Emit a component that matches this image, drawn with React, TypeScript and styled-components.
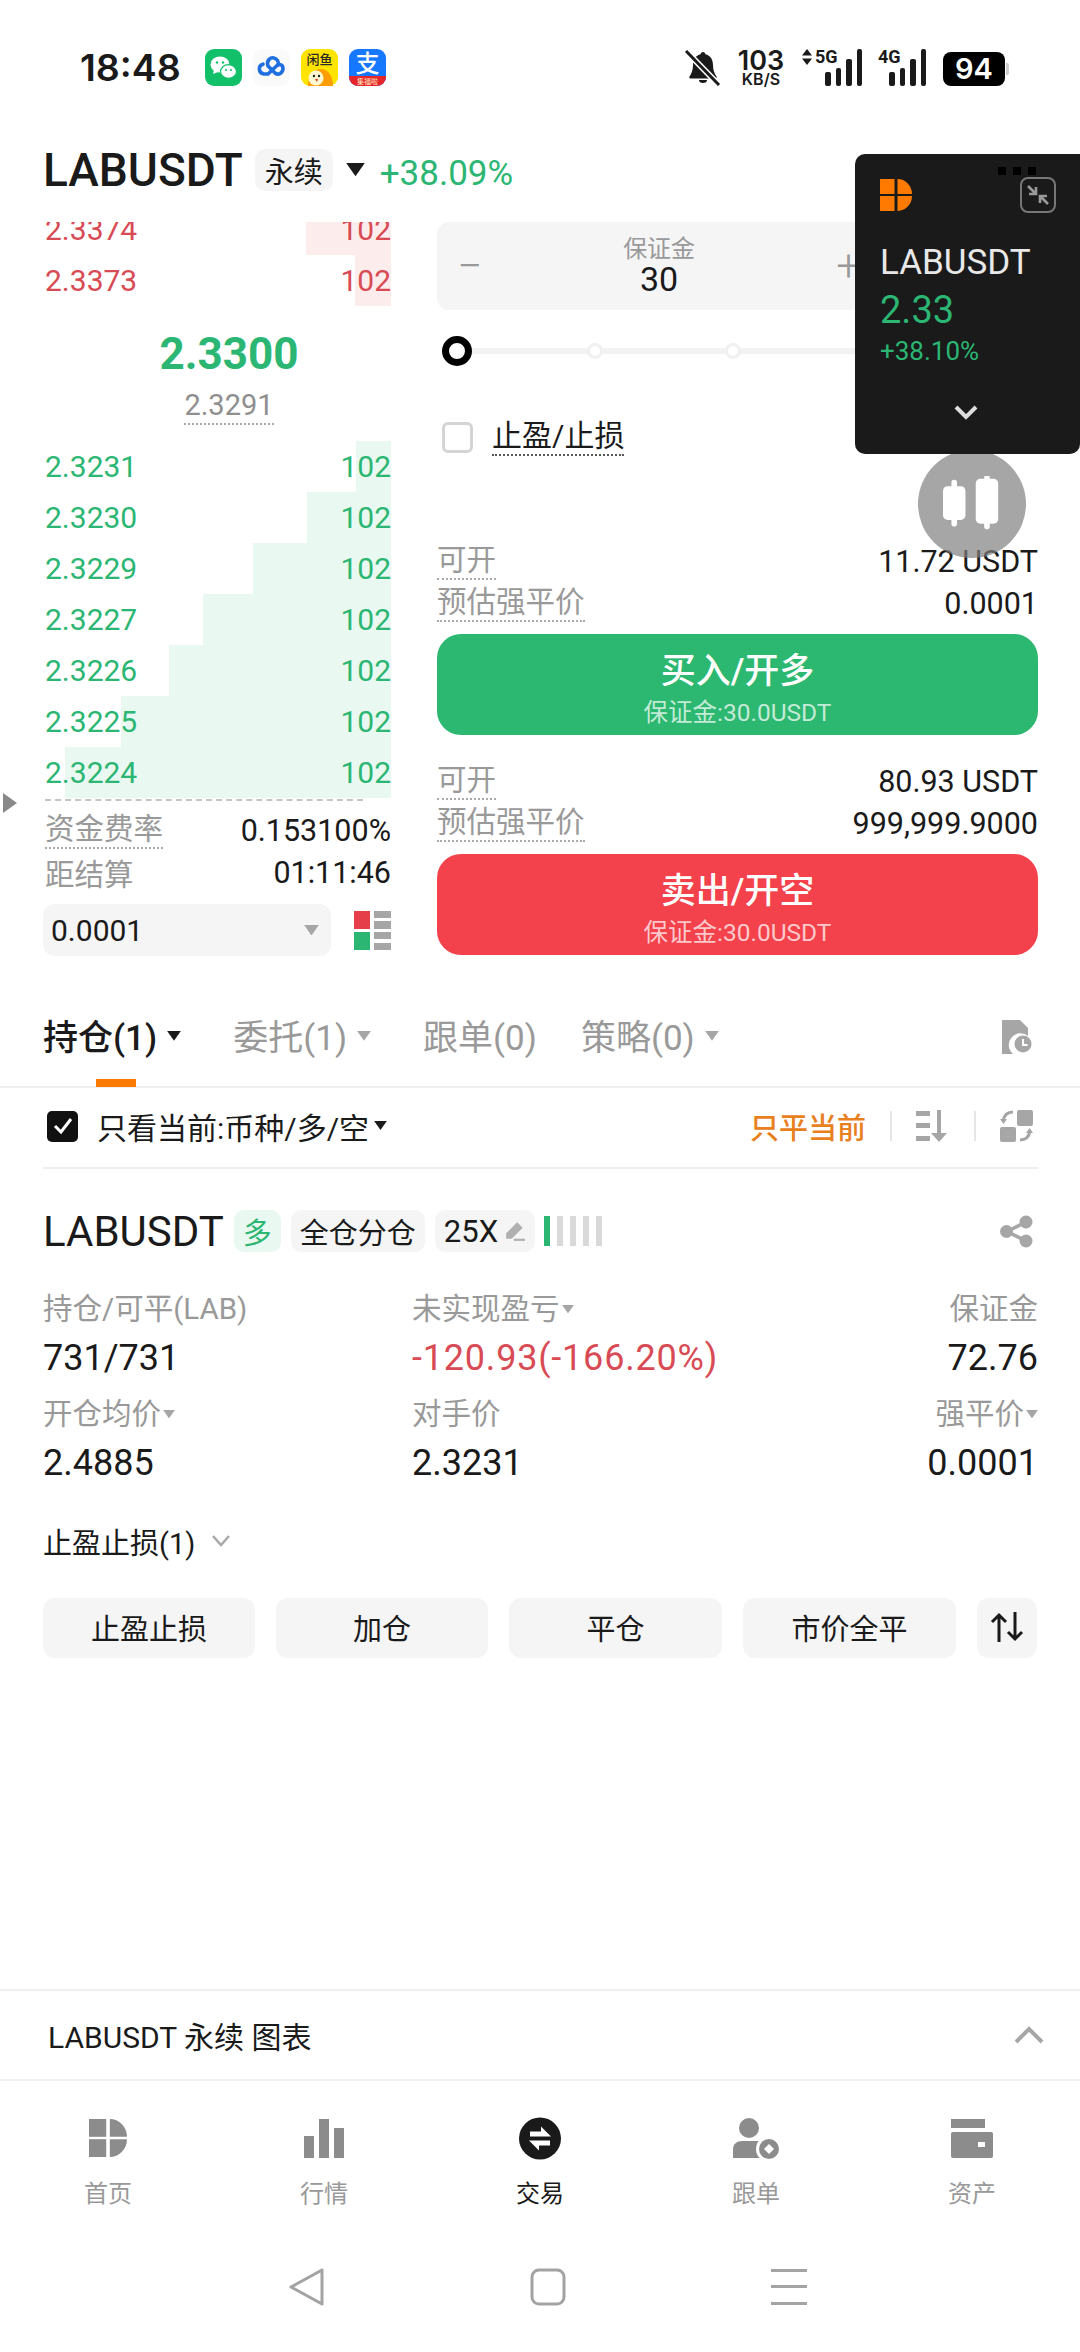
import { FC } from 'react'
import styled, { createGlobalStyle } from 'styled-components'

const GREEN = '#2bb673'
const RED = '#d84a54'
const GRAY = '#999999'
const DARK = '#1a1a1a'
const SOFT = '#f5f5f5'
const FONT = `Roboto, "Noto Sans CJK SC", sans-serif`

const asks = [
  { price: '2.3374', size: '102', depth: 85 },
  { price: '2.3373', size: '102', depth: 36 }
]

const bids = [
  { price: '2.3231', size: '102', depth: 35 },
  { price: '2.3230', size: '102', depth: 84 },
  { price: '2.3229', size: '102', depth: 138 },
  { price: '2.3227', size: '102', depth: 188 },
  { price: '2.3226', size: '102', depth: 222 },
  { price: '2.3225', size: '102', depth: 270 },
  { price: '2.3224', size: '102', depth: 326 }
]

const GlobalStyle = createGlobalStyle`
  html, body {
    margin: 0;
    padding: 0;
    background: #fff;
  }
`

const LogoMark: FC<{ color: string; size: number }> = ({ color, size }) => (
  <svg width={size} height={size} viewBox="0 0 32 32" fill={color}>
    <rect x="0" y="0" width="14.500" height="15" />
    <rect x="0" y="17" width="14.500" height="15" />
    <path d="M17.500 0a14.500 15 0 0 1 14.500 15H17.500z" />
    <path d="M17.500 17H32a14.500 15 0 0 1-14.500 15z" />
  </svg>
)

const Caret: FC<{ color?: string; size?: number }> = ({ color = '#8a8a8a', size = 13 }) => (
  <svg width={size} height={size * 0.7} viewBox="0 0 14 10" fill={color}>
    <path d="M0 0h14L7 10z" />
  </svg>
)

const WeChat = () => (
  <svg width="37" height="37" viewBox="0 0 37 37">
    <rect width="37" height="37" rx="9" fill="#13c06a" />
    <ellipse cx="15" cy="15.5" rx="9.5" ry="8" fill="#fff" />
    <path d="M9 21l-1 4 5-2z" fill="#fff" />
    <ellipse cx="23.5" cy="22.5" rx="8" ry="6.8" fill="#fff" stroke="#13c06a" strokeWidth="1.2" />
    <circle cx="12" cy="13.5" r="1.2" fill="#13c06a" />
    <circle cx="18" cy="13.5" r="1.2" fill="#13c06a" />
    <circle cx="21" cy="21" r="1" fill="#13c06a" />
    <circle cx="26" cy="21" r="1" fill="#13c06a" />
  </svg>
)

const BaiduCloud = () => (
  <svg width="37" height="37" viewBox="0 0 37 37" fill="none">
    <rect width="37" height="37" rx="9" fill="#fafafa" />
    <path
      d="M14 25h-3a5 5 0 0 1-1-9.800M15 25l9-8.500c2.500-2 6-.5 6 3S26 27 22 24l-7-7c-2-6 3-9 6-8 3.500 1 5 4 4 7"
      stroke="#1f6fe0"
      strokeWidth="3.600"
      strokeLinecap="round"
    />
  </svg>
)

const Xianyu = () => (
  <svg width="37" height="37" viewBox="0 0 37 37">
    <rect width="37" height="37" rx="9" fill="#ffe400" />
    <text x="18.5" y="15" fontSize="13" fontWeight="500" textAnchor="middle" fill="#2a2a2a" fontFamily={FONT}>
      闲鱼
    </text>
    <path d="M7 37c0-10 6-18 14-17 7 1 11 8 11 17z" fill="#ff9d00" />
    <circle cx="15" cy="29" r="7.5" fill="#fff8d0" />
    <circle cx="13" cy="27" r="1.2" fill="#222" />
    <circle cx="18" cy="27" r="1.2" fill="#222" />
    <path d="M14 30l2 3 1-3z" fill="#e8331c" />
  </svg>
)

const Alipay = () => (
  <svg width="37" height="37" viewBox="0 0 37 37">
    <rect width="37" height="37" rx="9" fill="#1677ff" />
    <path d="M0 27h37v1a9 9 0 0 1-9 9H9a9 9 0 0 1-9-9z" fill="#e5252a" />
    <text x="18.5" y="23" fontSize="24" fontWeight="500" textAnchor="middle" fill="#fff" fontFamily={FONT}>
      支
    </text>
    <text x="18.5" y="35" fontSize="7" textAnchor="middle" fill="#ffe9c0" fontFamily={FONT}>
      集福啦
    </text>
  </svg>
)

const MutedBell = () => (
  <svg width="36" height="36" viewBox="0 0 36 36" fill={DARK}>
    <path d="M18 2c-1.400 0-2.300 1-2.400 2.300-5 1.200-7.600 5.400-7.600 10.700 0 5-1.400 8.500-3.500 11.500-.6 1 0 2 1.100 2h24.800c1.100 0 1.700-1 1.100-2-2.100-3-3.500-6.500-3.500-11.500 0-5.300-2.600-9.500-7.600-10.700C20.300 3 19.400 2 18 2z" />
    <path d="M14 30h8a4 3 0 0 1-8 0z" />
    <path d="M1 1l33 34" stroke="#fff" strokeWidth="6" />
    <path d="M1 1l33 34" stroke={DARK} strokeWidth="3" />
  </svg>
)

const Signal: FC<{ heights: number[] }> = ({ heights }) => (
  <SignalBars>
    {heights.map((h, i) => (
      <SignalBar key={i} style={{ height: h }} />
    ))}
  </SignalBars>
)

const CompressIcon = () => (
  <svg width="36" height="36" viewBox="0 0 36 36" fill="none">
    <rect x="1" y="1" width="34" height="34" rx="7" stroke="#777" strokeWidth="2" />
    <path d="M8 9l8 8M16 10v7H9" stroke="#999" strokeWidth="2.6" />
    <path d="M28 27l-8-8M20 26v-7h7" stroke="#999" strokeWidth="2.6" />
  </svg>
)

const CandleIcon = () => (
  <svg width="58" height="56" viewBox="0 0 62 58" fill="#fff">
    <rect x="0" y="10" width="24" height="36" rx="5" />
    <rect x="9" y="3" width="6" height="50" rx="3" />
    <rect x="35" y="2" width="24" height="48" rx="5" />
    <rect x="44" y="-2" width="6" height="58" rx="3" />
  </svg>
)

const DepthIcon = () => (
  <svg width="37" height="39" viewBox="0 0 37 39">
    <rect x="0" y="0" width="16" height="18" fill="#e5404a" />
    <rect x="20" y="0" width="17" height="7" fill="#a6a6a6" />
    <rect x="20" y="10" width="17" height="8" fill="#a6a6a6" />
    <rect x="0" y="21" width="16" height="18" fill={GREEN} />
    <rect x="20" y="21" width="17" height="7" fill="#a6a6a6" />
    <rect x="20" y="32" width="17" height="7" fill="#a6a6a6" />
  </svg>
)

const HistoryDoc = () => (
  <svg width="30" height="34" viewBox="0 0 30 34">
    <path d="M0 0h18l8 8v8a11 11 0 0 0-15 18H0z" fill="#a6a6a6" />
    <circle cx="21" cy="24" r="8.500" fill="#a6a6a6" />
    <path d="M21 19v6h4.500" stroke="#fff" strokeWidth="2" fill="none" />
  </svg>
)

const SortIcon = () => (
  <svg width="34" height="32" viewBox="0 0 34 32" fill="#a6a6a6">
    <rect x="0" y="1" width="14" height="5" />
    <rect x="0" y="13" width="14" height="5" />
    <rect x="0" y="26" width="14" height="5" />
    <rect x="21" y="0" width="4" height="26" />
    <path d="M15 23h16l-8 9z" />
  </svg>
)

const SwapIcon = () => (
  <svg width="33" height="32" viewBox="0 0 33 32" fill="#a6a6a6">
    <rect x="17" y="0" width="16" height="16" rx="2" />
    <rect x="0" y="17" width="16" height="15" rx="2" />
    <path d="M13 2C7 2 4 5 3 11" stroke="#a6a6a6" strokeWidth="3" fill="none" />
    <path d="M0 9h7l-3.500 5z" />
    <path d="M20 30c6 0 9-3 10-9" stroke="#a6a6a6" strokeWidth="3" fill="none" />
    <path d="M26 23h7l-3.500-5z" />
  </svg>
)

const ShareIcon = () => (
  <svg width="33" height="33" viewBox="0 0 33 33">
    <path d="M26 7L7 16.500 26 26" stroke="#a6a6a6" strokeWidth="3.500" fill="none" />
    <circle cx="26" cy="7" r="6.500" fill="#a6a6a6" />
    <circle cx="6.500" cy="16.500" r="6.500" fill="#a6a6a6" />
    <circle cx="26" cy="26" r="6.500" fill="#a6a6a6" />
  </svg>
)

const PencilIcon = () => (
  <svg width="22" height="22" viewBox="0 0 20 20" fill="#b0b0b0">
    <path d="M12 2l5 5L7 17H2v-5z" />
    <rect x="9" y="17" width="10" height="2" />
  </svg>
)

const FlipIcon = () => (
  <svg width="34" height="30" viewBox="0 0 34 30" fill="none" stroke="#1a1a1a" strokeWidth="3">
    <path d="M9 30V3M2 10l7-7 7 7" />
    <path d="M25 0v27M18 20l7 7 7-7" />
  </svg>
)

const HomeIcon = () => <LogoMark color="#8c8c8c" size={38} />

const MarketIcon = () => (
  <svg width="40" height="39" viewBox="0 0 40 39" fill="#8c8c8c">
    <rect x="0" y="17" width="10" height="22" />
    <rect x="15" y="0" width="10" height="39" />
    <rect x="30" y="9" width="10" height="30" />
  </svg>
)

const TradeIcon = () => (
  <svg width="42" height="43" viewBox="0 0 42 43">
    <circle cx="21" cy="21.500" r="21" fill={DARK} />
    <path d="M11 19.500h21l-10-10v5H11z" fill="#fff" />
    <path d="M31 23.500H10l10 10v-5h11z" fill="#fff" />
  </svg>
)

const CopyIcon = () => (
  <svg width="47" height="41" viewBox="0 0 47 41">
    <circle cx="16" cy="10" r="10" fill="#8c8c8c" />
    <path d="M0 40V31c0-5 4-8 9-8h15c5 0 8 3 8 8v9z" fill="#8c8c8c" />
    <circle cx="36" cy="31" r="13" fill="#fff" />
    <circle cx="36" cy="31" r="10" fill="#8c8c8c" />
    <path d="M36 26l5 5-5 5-5-5z" fill="#fff" />
  </svg>
)

const WalletIcon = () => (
  <svg width="42" height="39" viewBox="0 0 42 39" fill="#8c8c8c">
    <rect x="0" y="0" width="34" height="9" />
    <rect x="0" y="13" width="42" height="26" rx="2" />
    <rect x="27" y="23" width="7" height="5" fill="#fff" />
  </svg>
)

const BackIcon = () => (
  <svg width="36" height="38" viewBox="0 0 36 38" fill="none" stroke="#a3a3a3" strokeWidth="3" strokeLinejoin="round">
    <path d="M33 2v34L2 19z" />
  </svg>
)

const HomeNavIcon = () => (
  <svg width="36" height="38" viewBox="0 0 36 38" fill="none" stroke="#a3a3a3" strokeWidth="3">
    <rect x="2" y="2" width="32" height="34" rx="7" />
  </svg>
)

const MenuIcon = () => (
  <svg width="36" height="38" viewBox="0 0 36 38" fill="#a3a3a3">
    <rect x="0" y="1" width="36" height="3" />
    <rect x="0" y="17" width="36" height="3" />
    <rect x="0" y="34" width="36" height="3" />
  </svg>
)

const navItems = [
  { label: '首页', icon: <HomeIcon />, active: false },
  { label: '行情', icon: <MarketIcon />, active: false },
  { label: '交易', icon: <TradeIcon />, active: true },
  { label: '跟单', icon: <CopyIcon />, active: false },
  { label: '资产', icon: <WalletIcon />, active: false }
]

const OrderSide: FC<{ avail: string; liq: string; title: string; color: string }> = ({ avail, liq, title, color }) => (
  <>
    <InfoRow>
      <Dotted>可开</Dotted>
      <InfoValue>{avail}</InfoValue>
    </InfoRow>
    <InfoRow>
      <Dotted>预估强平价</Dotted>
      <InfoValue>{liq}</InfoValue>
    </InfoRow>
    <SideButton $color={color}>
      <SideTitle>{title}</SideTitle>
      <SideSub>保证金:30.0USDT</SideSub>
    </SideButton>
  </>
)

export default function App() {
  return (
    <Page>
      <GlobalStyle />
      <StatusBar>
        <Clock>18:48</Clock>
        <AppIcons>
          <WeChat />
          <BaiduCloud />
          <Xianyu />
          <Alipay />
        </AppIcons>
        <StatusRight>
          <MutedBell />
          <Speed>
            <SpeedNum>103</SpeedNum>
            <SpeedUnit>KB/S</SpeedUnit>
          </Speed>
          <Net $width={60}>
            <NetLabel>
              <svg width="10" height="16" viewBox="0 0 10 16" fill={DARK}>
                <path d="M5 0l5 6.500H0zM5 16l5-6.500H0z" />
              </svg>
              5G
            </NetLabel>
            <Signal heights={[14, 18, 27, 37]} />
          </Net>
          <Net $width={48}>
            <NetLabel>4G</NetLabel>
            <Signal heights={[14, 18, 27, 37]} />
          </Net>
          <Battery>94</Battery>
        </StatusRight>
      </StatusBar>

      <Header>
        <Symbol>LABUSDT</Symbol>
        <Perp>永续</Perp>
        <Caret color={DARK} size={19} />
        <HeaderChange>+38.09%</HeaderChange>
      </Header>

      <Trade>
        <Book>
          <AskClip>
            {asks.map(r => (
              <BookRow key={r.price}>
                <DepthBar $color="#fdecec" style={{ width: r.depth }} />
                <BookPrice $color={RED}>{r.price}</BookPrice>
                <BookSize $color={RED}>{r.size}</BookSize>
              </BookRow>
            ))}
          </AskClip>
          <Mid>
            <MidPrice>2.3300</MidPrice>
            <MarkPrice>2.3291</MarkPrice>
          </Mid>
          {bids.map(r => (
            <BookRow key={r.price}>
              <DepthBar $color="#e9f8f0" style={{ width: r.depth }} />
              <BookPrice $color={GREEN}>{r.price}</BookPrice>
              <BookSize $color={GREEN}>{r.size}</BookSize>
            </BookRow>
          ))}
          <DashLine />
          <FundingRow>
            <Dotted>资金费率</Dotted>
            <InfoValue>0.153100%</InfoValue>
          </FundingRow>
          <FundingRow>
            <FundingLabel>距结算</FundingLabel>
            <InfoValue>01:11:46</InfoValue>
          </FundingRow>
          <PrecisionRow>
            <PrecisionSelect>
              0.0001
              <Caret size={15} color="#a6a6a6" />
            </PrecisionSelect>
            <DepthIcon />
          </PrecisionRow>
        </Book>

        <Form>
          <Stepper>
            <StepButton>−</StepButton>
            <StepCenter>
              <StepLabel>保证金</StepLabel>
              <StepValue>30</StepValue>
            </StepCenter>
            <StepButton>+</StepButton>
          </Stepper>
          <Slider>
            <Knob />
            <Tick />
            <Tick />
            <Tick />
            <Tick />
          </Slider>
          <TpSlRow>
            <EmptyBox />
            <TpSlLabel>止盈/止损</TpSlLabel>
          </TpSlRow>
          <OrderSide avail="11.72 USDT" liq="0.0001" title="买入/开多" color="#2cb870" />
          <SecondSide>
            <OrderSide avail="80.93 USDT" liq="999,999.9000" title="卖出/开空" color="#f3424b" />
          </SecondSide>
        </Form>
      </Trade>

      <Tabs>
        <Tab $active>
          持仓(1)
          <Caret color={DARK} size={14} />
          <TabMark />
        </Tab>
        <Tab>
          委托(1)
          <Caret color="#a6a6a6" size={14} />
        </Tab>
        <Tab $narrow>跟单(0)</Tab>
        <Tab>
          策略(0)
          <Caret color="#a6a6a6" size={14} />
        </Tab>
        <TabsEnd>
          <HistoryDoc />
        </TabsEnd>
      </Tabs>

      <FilterRow>
        <CheckBox>
          <svg width="20" height="18" viewBox="0 0 20 18" fill="none" stroke="#fff" strokeWidth="3">
            <path d="M2 9l6 6L18 2" />
          </svg>
        </CheckBox>
        <FilterText>只看当前:币种/多/空</FilterText>
        <Caret color={DARK} />
        <FilterEnd>
          <CloseCurrent>只平当前</CloseCurrent>
          <Divider />
          <SortIcon />
          <Divider />
          <SwapIcon />
        </FilterEnd>
      </FilterRow>

      <Position>
        <PositionHead>
          <PositionSymbol>LABUSDT</PositionSymbol>
          <Chip $green>多</Chip>
          <Chip>全仓分仓</Chip>
          <LeverageChip>
            25X
            <PencilIcon />
          </LeverageChip>
          <Risk>
            <RiskBar $on />
            <RiskBar />
            <RiskBar />
            <RiskBar />
            <RiskBar />
          </Risk>
          <HeadEnd>
            <ShareIcon />
          </HeadEnd>
        </PositionHead>

        <Stats>
          <Stat>
            <StatLabel>持仓/可平(LAB)</StatLabel>
            <StatValue>731/731</StatValue>
          </Stat>
          <Stat>
            <StatLabel>
              未实现盈亏
              <Caret size={12} color="#a6a6a6" />
            </StatLabel>
            <StatValue $red>-120.93(-166.20%)</StatValue>
          </Stat>
          <Stat $right>
            <StatLabel>保证金</StatLabel>
            <StatValue>72.76</StatValue>
          </Stat>
          <Stat>
            <StatLabel>
              开仓均价
              <Caret size={12} color="#a6a6a6" />
            </StatLabel>
            <StatValue>2.4885</StatValue>
          </Stat>
          <Stat>
            <StatLabel>对手价</StatLabel>
            <StatValue>2.3231</StatValue>
          </Stat>
          <Stat $right>
            <StatLabel>
              强平价
              <Caret size={12} color="#a6a6a6" />
            </StatLabel>
            <StatValue>0.0001</StatValue>
          </Stat>
        </Stats>

        <TpSlSummary>
          止盈止损(1)
          <svg width="20" height="12" viewBox="0 0 20 12" fill="none" stroke="#aaa" strokeWidth="2.500">
            <path d="M2 1l8 9 8-9" />
          </svg>
        </TpSlSummary>

        <Actions>
          <ActionButton>止盈止损</ActionButton>
          <ActionButton>加仓</ActionButton>
          <ActionButton>平仓</ActionButton>
          <ActionButton>市价全平</ActionButton>
          <ActionButton>
            <FlipIcon />
          </ActionButton>
        </Actions>
      </Position>

      <ChartBar>
        LABUSDT 永续 图表
        <svg width="30" height="18" viewBox="0 0 30 18" fill="none" stroke="#a6a6a6" strokeWidth="4">
          <path d="M2 16L15 3l13 13" />
        </svg>
      </ChartBar>

      <BottomNav>
        {navItems.map(item => (
          <NavItem key={item.label} $active={item.active}>
            <NavIcon>{item.icon}</NavIcon>
            {item.label}
          </NavItem>
        ))}
      </BottomNav>

      <SystemNav>
        <BackIcon />
        <HomeNavIcon />
        <MenuIcon />
      </SystemNav>

      <FloatCard>
        <FloatDots>
          <i />
          <i />
          <i />
        </FloatDots>
        <FloatTop>
          <LogoMark color="#ff7a00" size={32} />
          <CompressIcon />
        </FloatTop>
        <FloatSymbol>LABUSDT</FloatSymbol>
        <FloatPrice>2.33</FloatPrice>
        <FloatChange>+38.10%</FloatChange>
        <FloatChevron>
          <svg width="24" height="15" viewBox="0 0 24 15" fill="none" stroke="#ddd" strokeWidth="4">
            <path d="M2 2l10 10L22 2" />
          </svg>
        </FloatChevron>
      </FloatCard>
      <CandleBubble>
        <CandleIcon />
      </CandleBubble>
      <EdgeHandle />
    </Page>
  )
}

const Page = styled.div`
  position: relative;
  width: 1080px;
  height: 2352px;
  overflow: hidden;
  background: #fff;
  color: ${DARK};
  font-family: ${FONT};
  font-size: 30px;
`

const StatusBar = styled.div`
  display: flex;
  align-items: center;
  height: 135px;
  padding: 0 75px 0 80px;
  box-sizing: border-box;
`

const Clock = styled.div`
  font-family: Inter, sans-serif;
  font-size: 37.5px;
  font-weight: 600;
  width: 125px;
`

const AppIcons = styled.div`
  display: flex;
  gap: 11px;
`

const StatusRight = styled.div`
  display: flex;
  align-items: center;
  margin-left: auto;
`

const Speed = styled.div`
  display: flex;
  flex-direction: column;
  align-items: center;
  width: 44px;
  margin: 0 19px 0 18px;
  font-family: Inter, sans-serif;
  font-weight: 600;
  line-height: 1;
`

const SpeedNum = styled.span`
  font-size: 27px;
  line-height: 23px;
`

const SpeedUnit = styled.span`
  font-size: 16px;
  line-height: 15px;
`

const Net = styled.div<{ $width: number }>`
  position: relative;
  display: flex;
  justify-content: flex-end;
  align-items: flex-end;
  width: ${p => p.$width}px;
  height: 37px;
  margin-right: 16px;
`

const NetLabel = styled.span`
  position: absolute;
  left: 0;
  top: -1px;
  display: flex;
  align-items: center;
  gap: 3px;
  font-family: Roboto, sans-serif;
  font-size: 18px;
  font-weight: 700;
  line-height: 18px;
`

const SignalBars = styled.div`
  display: flex;
  align-items: flex-end;
  gap: 5px;
`

const SignalBar = styled.span`
  width: 5.5px;
  background: ${DARK};
  border-radius: 2px;
`

const Battery = styled.div`
  position: relative;
  width: 62px;
  height: 34px;
  margin: 3px 0 0 1px;
  background: #000;
  border-radius: 8px;
  color: #fff;
  font-family: Inter, sans-serif;
  font-size: 29px;
  font-weight: 600;
  line-height: 34px;
  text-align: center;

  &::after {
    content: '';
    position: absolute;
    right: -4px;
    top: 11px;
    width: 3px;
    height: 12px;
    background: #ccc;
    border-radius: 0 2px 2px 0;
  }
`

const Header = styled.div`
  display: flex;
  align-items: center;
  height: 70px;
  margin-bottom: 17px;
  padding-left: 43px;
`

const Symbol = styled.div`
  font-size: 46px;
  font-weight: 500;
`

const Perp = styled.div`
  display: flex;
  align-items: center;
  justify-content: center;
  width: 78px;
  height: 42px;
  margin: 0 13px 0 12px;
  background: ${SOFT};
  border-radius: 10px;
  font-size: 29px;
`

const HeaderChange = styled.div`
  margin: 6px 0 0 15px;
  color: ${GREEN};
  font-size: 35px;
`

const Trade = styled.div`
  display: flex;
  gap: 46px;
  height: 739px;
  padding: 0 42px 0 43px;
`

const Book = styled.div`
  display: flex;
  flex-direction: column;
  width: 348px;
  flex: none;
`

const AskClip = styled.div`
  display: flex;
  flex-direction: column;
  justify-content: flex-end;
  height: 84px;
  overflow: hidden;
`

const BookRow = styled.div`
  position: relative;
  display: flex;
  flex: none;
  align-items: center;
  justify-content: space-between;
  height: 51px;
  padding: 0 0 0 2px;
`

const DepthBar = styled.span<{ $color: string }>`
  position: absolute;
  top: 0;
  right: 0;
  bottom: 0;
  background: ${p => p.$color};
`

const BookPrice = styled.span<{ $color: string }>`
  position: relative;
  color: ${p => p.$color};
`

const BookSize = styled(BookPrice)``

const Mid = styled.div`
  display: flex;
  flex-direction: column;
  align-items: center;
  height: 135px;
  flex: none;
  margin-left: 24px;
  padding-top: 25px;
  box-sizing: border-box;
`

const MidPrice = styled.div`
  color: ${GREEN};
  font-size: 44px;
  font-weight: 700;
  line-height: 46px;
`

const MarkPrice = styled.div`
  margin-top: 11px;
  color: #8f8f8f;
  font-size: 29px;
  line-height: 35px;
  border-bottom: 2px dotted #aaa;
`

const DashLine = styled.div`
  width: 318px;
  margin: 1px 0 8px 2px;
  border-top: 2px dashed #c4c4c4;
`

const FundingRow = styled.div`
  display: flex;
  align-items: center;
  justify-content: space-between;
  height: 42px;
  padding-left: 2px;
`

const Dotted = styled.span`
  color: ${GRAY};
  font-size: 29.5px;
  line-height: 36px;
  border-bottom: 2px dotted #aaa;
`

const FundingLabel = styled.span`
  color: ${GRAY};
  font-size: 29.5px;
`

const InfoValue = styled.span`
  color: ${DARK};
  font-size: 30.5px;
`

const PrecisionRow = styled.div`
  display: flex;
  align-items: center;
  justify-content: space-between;
  height: 52px;
  margin-top: 11px;
`

const PrecisionSelect = styled.div`
  display: flex;
  align-items: center;
  justify-content: space-between;
  width: 288px;
  height: 52px;
  padding: 0 12px 0 8px;
  box-sizing: border-box;
  background: ${SOFT};
  border-radius: 12px;
`

const Form = styled.div`
  display: flex;
  flex-direction: column;
  width: 601px;
  flex: none;
`

const Stepper = styled.div`
  display: flex;
  align-items: center;
  justify-content: space-between;
  width: 440px;
  height: 88px;
  flex: none;
  padding: 0 16px 0 20px;
  box-sizing: border-box;
  background: ${SOFT};
  border-radius: 12px;
`

const StepButton = styled.span`
  color: #999;
  font-size: 44px;
  font-weight: 300;
`

const StepCenter = styled.div`
  display: flex;
  flex-direction: column;
  align-items: center;
`

const StepLabel = styled.span`
  color: ${GRAY};
  font-size: 24px;
  line-height: 26px;
`

const StepValue = styled.span`
  font-size: 34px;
  line-height: 35px;
`

const Slider = styled.div`
  position: relative;
  display: flex;
  align-items: center;
  gap: 122px;
  height: 82px;
  flex: none;
  margin: 0 14px 0 5px;

  &::before {
    content: '';
    position: absolute;
    left: 0;
    right: 0;
    top: 38px;
    height: 6px;
    background: #f2f2f2;
  }
`

const Knob = styled.span`
  position: relative;
  flex: none;
  width: 30px;
  height: 30px;
  margin-right: -7px;
  box-sizing: border-box;
  background: #fff;
  border: 7px solid #000;
  border-radius: 50%;
`

const Tick = styled.span`
  position: relative;
  flex: none;
  width: 16px;
  height: 16px;
  box-sizing: border-box;
  background: #fff;
  border: 3px solid #f0f0f0;
  border-radius: 50%;
`

const TpSlRow = styled.div`
  display: flex;
  align-items: center;
  gap: 19px;
  height: 90px;
  flex: none;
  padding-left: 5px;
  margin-bottom: 58px;
`

const EmptyBox = styled.span`
  width: 31px;
  height: 31px;
  box-sizing: border-box;
  border: 3px solid #d4d4d4;
  border-radius: 6px;
`

const TpSlLabel = styled.span`
  font-size: 30px;
  line-height: 36px;
  border-bottom: 2px dotted #555;
`

const InfoRow = styled.div`
  display: flex;
  align-items: center;
  justify-content: space-between;
  height: 42px;
  flex: none;
`

const SideButton = styled.div<{ $color: string }>`
  display: flex;
  flex-direction: column;
  align-items: center;
  justify-content: center;
  height: 101px;
  flex: none;
  margin-top: 10px;
  padding-top: 9px;
  box-sizing: border-box;
  background: ${p => p.$color};
  border-radius: 24px;
  color: #fff;
`

const SideTitle = styled.span`
  font-size: 35px;
  font-weight: 500;
  line-height: 44px;
`

const SideSub = styled.span`
  margin-top: 4px;
  color: rgba(255, 255, 255, 0.72);
  font-size: 24.5px;
  line-height: 30px;
`

const SecondSide = styled.div`
  display: flex;
  flex-direction: column;
  margin-top: 25px;
`

const Tabs = styled.div`
  display: flex;
  align-items: center;
  gap: 52px;
  height: 127px;
  padding: 21px 48px 0 43px;
  box-sizing: border-box;
  border-bottom: 2px solid #eeeeee;
`

const Tab = styled.div<{ $active?: boolean; $narrow?: boolean }>`
  position: relative;
  display: flex;
  align-items: center;
  gap: 10px;
  color: ${p => (p.$active ? DARK : GRAY)};
  font-size: 35px;
  font-weight: ${p => (p.$active ? 500 : 400)};
  margin-right: ${p => (p.$narrow ? '-8px' : '0')};

  svg {
    margin-top: 4px;
  }
`

const TabMark = styled.span`
  position: absolute;
  left: 53px;
  top: 70px;
  width: 40px;
  height: 8px;
  background: #ff7a00;
`

const TabsEnd = styled.div`
  display: flex;
  margin-left: auto;
  margin-top: 6px;
`

const FilterRow = styled.div`
  display: flex;
  align-items: center;
  height: 81px;
  margin: 0 42px 0 43px;
  padding: 0 0 3px 4px;
  box-sizing: border-box;
  border-bottom: 2px solid #eeeeee;
`

const CheckBox = styled.span`
  display: flex;
  align-items: center;
  justify-content: center;
  width: 31px;
  height: 31px;
  margin-right: 19px;
  background: #111;
  border-radius: 5px;
`

const FilterText = styled.span`
  margin-right: 5px;
  font-size: 30px;
`

const FilterEnd = styled.div`
  display: flex;
  align-items: center;
  gap: 24px;
  margin-left: auto;
  padding-right: 5px;
`

const CloseCurrent = styled.span`
  color: #e8801e;
  font-size: 29px;
  font-weight: 500;
`

const Divider = styled.span`
  width: 2px;
  height: 30px;
  background: #e6e6e6;
`

const Position = styled.div`
  display: flex;
  flex-direction: column;
  padding: 0 42px 0 43px;
`

const PositionHead = styled.div`
  display: flex;
  align-items: center;
  height: 42px;
  margin-top: 41px;
  gap: 10px;
`

const PositionSymbol = styled.span`
  font-size: 42px;
`

const Chip = styled.span<{ $green?: boolean }>`
  display: flex;
  align-items: center;
  height: 42px;
  padding: 0 9px;
  background: ${p => (p.$green ? '#e9f8f0' : SOFT)};
  border-radius: 10px;
  color: ${p => (p.$green ? GREEN : DARK)};
  font-size: 29px;
`

const LeverageChip = styled(Chip)`
  gap: 6px;
  font-size: 31px;
`

const Risk = styled.div`
  display: flex;
  gap: 7px;
  margin-left: -1px;
`

const RiskBar = styled.span<{ $on?: boolean }>`
  width: 6px;
  height: 30px;
  background: ${p => (p.$on ? GREEN : '#d9d9d9')};
`

const HeadEnd = styled.div`
  display: flex;
  margin-left: auto;
  padding-right: 5px;
`

const Stats = styled.div`
  display: grid;
  grid-template-columns: 369px 1fr auto;
  grid-auto-rows: 105px;
  margin-top: 37px;
`

const Stat = styled.div<{ $right?: boolean }>`
  display: flex;
  flex-direction: column;
  align-items: ${p => (p.$right ? 'flex-end' : 'flex-start')};
`

const StatLabel = styled.span`
  display: flex;
  align-items: center;
  gap: 2px;
  color: ${GRAY};
  font-size: 29.5px;
  line-height: 40px;
`

const StatValue = styled.span<{ $red?: boolean }>`
  margin-top: 9px;
  color: ${p => (p.$red ? RED : DARK)};
  font-size: 36px;
  line-height: 40px;
  letter-spacing: ${p => (p.$red ? '0.8px' : '0')};
`

const TpSlSummary = styled.div`
  display: flex;
  align-items: center;
  gap: 16px;
  margin-top: 22px;
  height: 40px;
  font-size: 29px;
`

const Actions = styled.div`
  display: grid;
  grid-template-columns: 212px 212px 213px 213px 60px;
  gap: 21px;
  margin-top: 37px;
`

const ActionButton = styled.div`
  display: flex;
  align-items: center;
  justify-content: center;
  height: 60px;
  padding-bottom: 3px;
  box-sizing: border-box;
  background: ${SOFT};
  border-radius: 12px;
  font-size: 29px;
`

const ChartBar = styled.div`
  display: flex;
  align-items: center;
  justify-content: space-between;
  height: 92px;
  box-sizing: border-box;
  margin-top: 331px;
  padding: 0 36px 0 48px;
  border-top: 2px solid #f0f0f0;
  border-bottom: 2px solid #f0f0f0;
  font-size: 30px;
`

const BottomNav = styled.div`
  display: grid;
  grid-template-columns: repeat(5, 1fr);
  height: 172px;
`

const NavItem = styled.div<{ $active?: boolean }>`
  display: flex;
  flex-direction: column;
  align-items: center;
  color: ${p => (p.$active ? DARK : GRAY)};
  font-size: 24px;
`

const NavIcon = styled.div`
  display: flex;
  align-items: center;
  justify-content: center;
  height: 44px;
  margin: 35px 0 14px;
`

const SystemNav = styled.div`
  display: flex;
  justify-content: center;
  gap: 205px;
  padding: 15px 0 0 15px;
`

const FloatCard = styled.div`
  position: absolute;
  left: 855px;
  top: 154px;
  z-index: 2;
  width: 225px;
  height: 300px;
  padding: 23px 24px 0 25px;
  box-sizing: border-box;
  background: #1a1a1a;
  border-radius: 10px 0 10px 10px;
  color: #e8e8e8;
`

const FloatDots = styled.div`
  position: absolute;
  left: 143px;
  top: 13px;
  display: flex;
  gap: 7px;

  i {
    width: 8px;
    height: 8px;
    background: #000;
  }
`

const FloatTop = styled.div`
  display: flex;
  align-items: center;
  justify-content: space-between;
`

const FloatSymbol = styled.div`
  margin-top: 27px;
  font-size: 35px;
  line-height: 46px;
`

const FloatPrice = styled.div`
  margin-top: 1px;
  color: ${GREEN};
  font-size: 38px;
  line-height: 46px;
`

const FloatChange = styled.div`
  margin-top: 1px;
  color: ${GREEN};
  font-size: 26px;
  line-height: 34px;
`

const FloatChevron = styled.div`
  display: flex;
  justify-content: center;
  margin-top: 37px;
  padding-right: 4px;
`

const CandleBubble = styled.div`
  position: absolute;
  left: 918px;
  top: 450px;
  z-index: 1;
  display: flex;
  align-items: center;
  justify-content: center;
  width: 108px;
  height: 108px;
  background: rgba(128, 128, 128, 0.7);
  border-radius: 50%;
`

const EdgeHandle = styled.span`
  position: absolute;
  left: 3px;
  top: 793px;
  border-left: 14px solid #888;
  border-top: 10px solid transparent;
  border-bottom: 10px solid transparent;
`
